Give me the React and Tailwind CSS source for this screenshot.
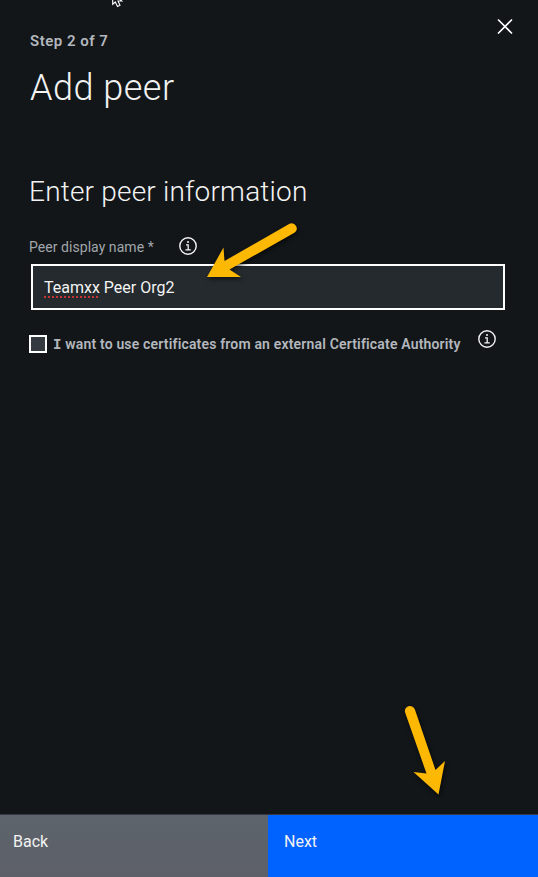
function InfoIcon() {
  return (
    <svg width="18" height="18" viewBox="0 0 18 18" fill="none" stroke="#f3f3f3" className="block shrink-0">
      <circle cx="9" cy="9" r="8.2" strokeWidth="1.4" />
      <path d="M7 7.8h2.2v5M6.4 12.9h5.4" strokeWidth="1.3" />
      <circle cx="9" cy="5" r="1" fill="#f3f3f3" stroke="none" />
    </svg>
  );
}

function CloseIcon() {
  return (
    <svg width="16" height="16" viewBox="0 0 16 16" fill="none" stroke="#fff" strokeWidth="1.6" className="block">
      <path d="M1 1.5l14 14M15 1.5L1 15.5" />
    </svg>
  );
}

function Annotations() {
  return (
    <svg width="538" height="877" viewBox="0 0 538 877" className="pointer-events-none absolute left-0 top-0">
      <g className="drop-shadow-[1px_2px_2px_rgba(0,0,0,0.6)]" fill="#fdb803">
        <path d="M289.5 223.7A5.2 5.2 0 0 1 294.8 232.5L229.5 269.5L241 277L207 277L223.5 247.5L224.5 261Z" />
        <path d="M405.2 712.7A5 5 0 0 1 414.8 709.3L435.5 770L445 761L438.5 794.5L413.5 772L426.5 773.5Z" />
      </g>
      <path d="M112.7 -7V4.2L115.3 2L117.5 6.5L120 5.3L118 1H121.8Z" fill="#111417" stroke="#fff" strokeWidth="1.1" />
    </svg>
  );
}

export default function App() {
  return (
    <div className="relative flex h-[877px] w-[538px] flex-col overflow-hidden bg-[#121619] font-['Roboto','Liberation_Sans',sans-serif] text-[#f3f3f3]">
      <header className="flex h-[120px] items-start justify-between pl-[30px] pr-[25px]">
        <div className="whitespace-nowrap pt-[31px]">
          <p className="text-[15px] font-semibold leading-5 tracking-[0.5px] text-[#b4b8be]">Step 2 of 7</p>
          <h1 className="mt-[15px] text-[36px] font-light leading-[44px] tracking-[0.5px]">Add peer</h1>
        </div>
        <button aria-label="Close" className="mt-[18px]"><CloseIcon /></button>
      </header>
      <main className="flex-1 whitespace-nowrap pl-[29px] pt-[54px]">
        <h2 className="text-[28px] font-light leading-9 tracking-[0.2px]">Enter peer information</h2>
        <div className="mt-[27px] flex h-[18px] items-center">
          <label className="w-[150px] pt-[2px] text-[14px] leading-[18px] tracking-[0.05px] text-[#a2a6ab]">Peer display name *</label>
          <InfoIcon />
        </div>
        <div className="ml-[2px] mt-[9px] flex h-[46px] w-[474px] items-center border-2 border-white bg-[#242a2e] pl-[11px] pt-[2px] text-[16px]">
          <span><span className="underline decoration-[#c93434] decoration-dotted decoration-2 underline-offset-[3px]">Teamxx</span> Peer Org2</span>
        </div>
        <div className="mt-[20px] flex items-start">
          <span className="mt-[5px] h-[18px] w-[18px] shrink-0 border-2 border-white bg-[#343a3f]" />
          <span className="ml-[6px] mt-1 w-[425px] text-[14px] font-semibold leading-5 tracking-[0.17px] text-[#b4b8be]">
            <span className="font-['Liberation_Mono',monospace]">I</span> want to use certificates from an external Certificate Authority
          </span>
          <InfoIcon />
        </div>
      </main>
      <footer className="flex h-[63px] border-t border-[#343a3f] text-[16px] leading-5">
        <button className="w-[268px] bg-linear-to-b from-[#5d646b] to-[#5d6068] pb-[8px] pl-[13px] text-left">Back</button>
        <button className="flex-1 bg-[#0062ff] pb-[8px] pl-4 text-left">Next</button>
      </footer>
      <Annotations />
    </div>
  );
}
